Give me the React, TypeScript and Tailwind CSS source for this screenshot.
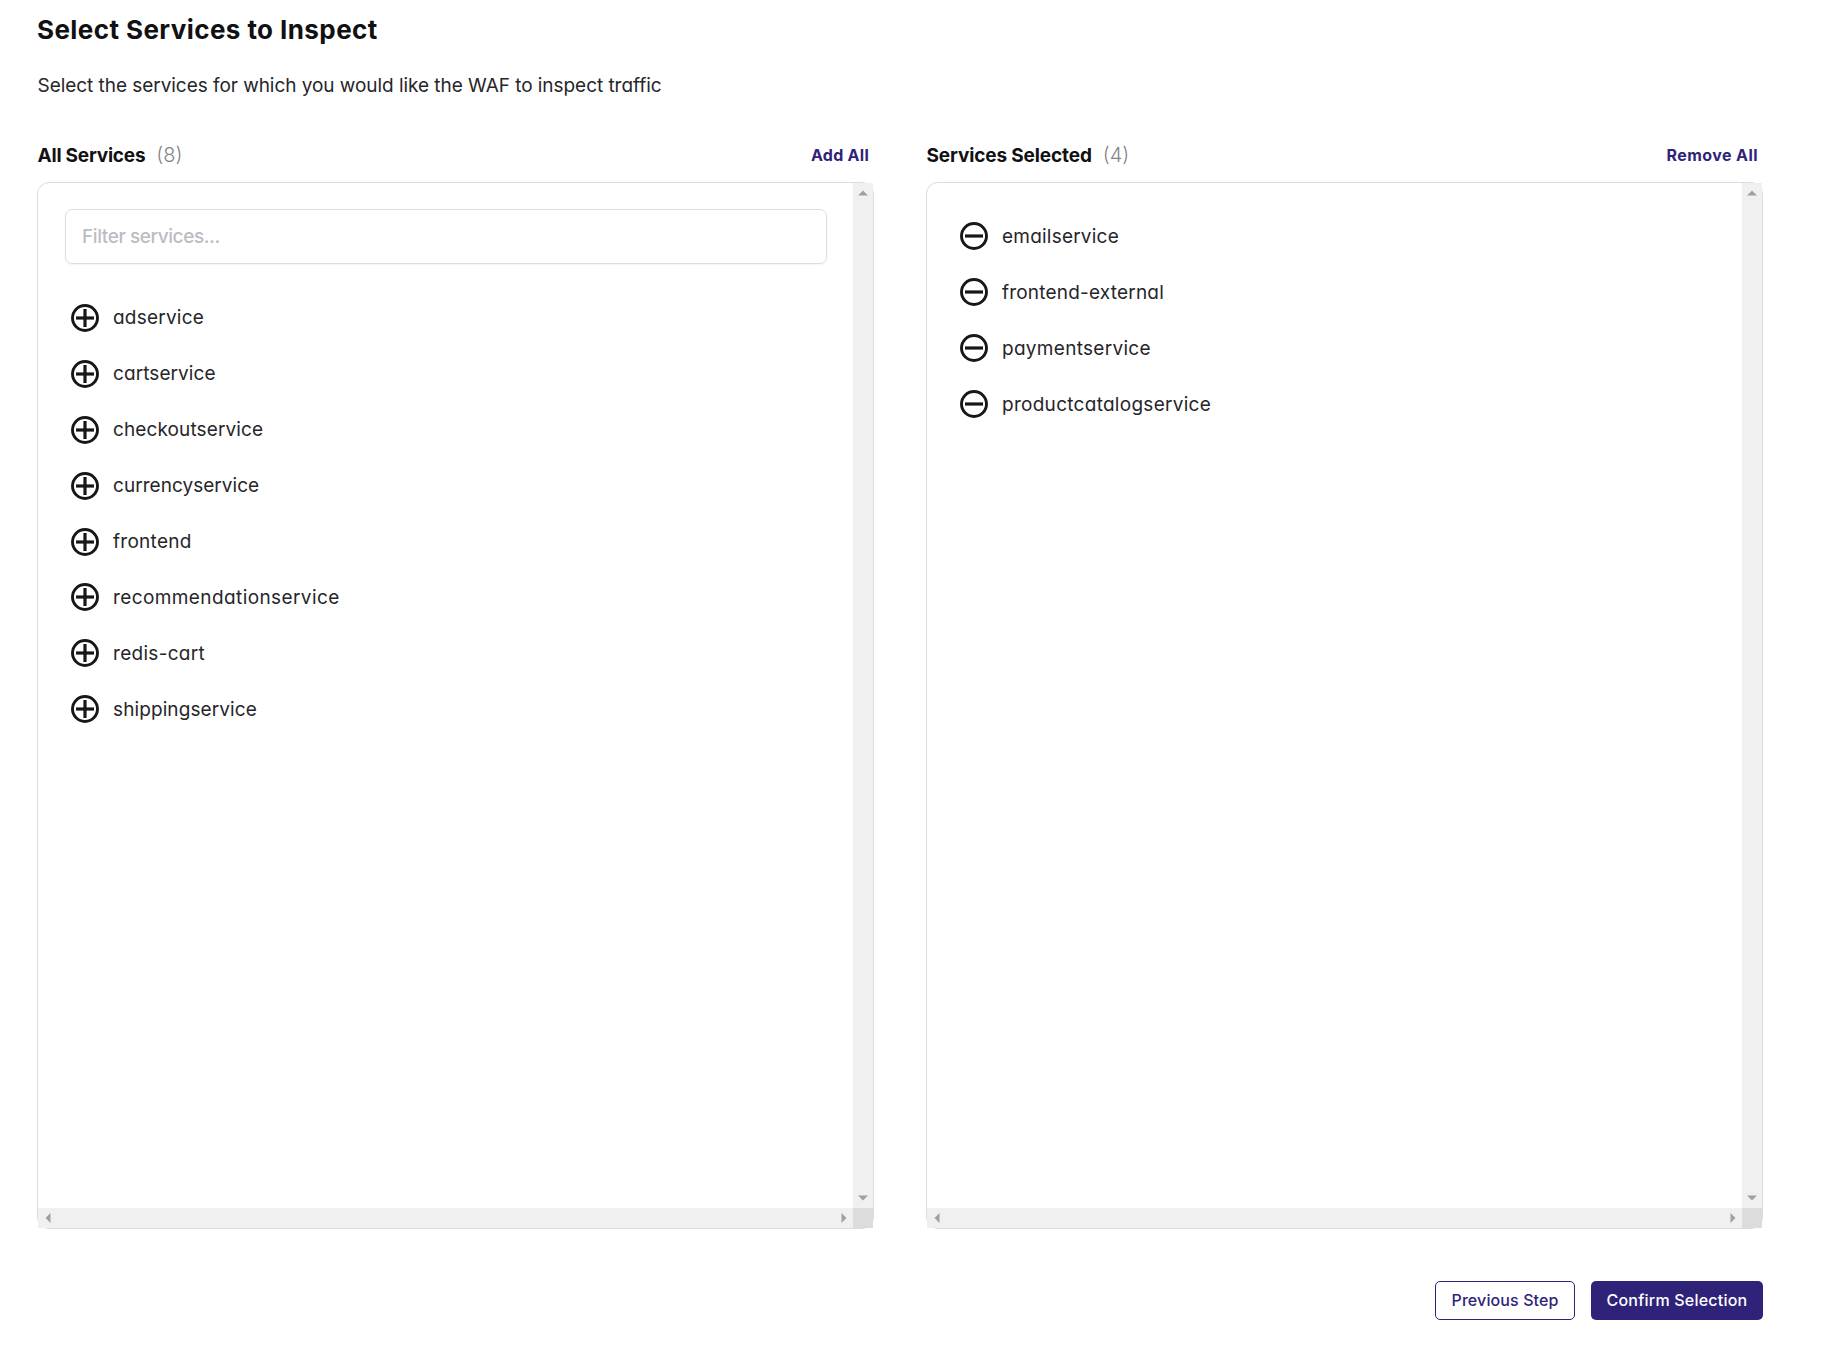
import { ReactNode } from 'react';

type Service = { name: string; tracking: string };

const available: Service[] = [
  { name: 'adservice', tracking: 'tracking-[0.22px]' },
  { name: 'cartservice', tracking: 'tracking-[0.08px]' },
  { name: 'checkoutservice', tracking: 'tracking-[0.11px]' },
  { name: 'currencyservice', tracking: 'tracking-[0.04px]' },
  { name: 'frontend', tracking: 'tracking-[0.28px]' },
  { name: 'recommendationservice', tracking: 'tracking-[0.4px]' },
  { name: 'redis-cart', tracking: 'tracking-[0.3px]' },
  { name: 'shippingservice', tracking: 'tracking-[0.1px]' },
];

const selected: Service[] = [
  { name: 'emailservice', tracking: 'tracking-[0.22px]' },
  { name: 'frontend-external', tracking: 'tracking-[0.2px]' },
  { name: 'paymentservice', tracking: 'tracking-[0.3px]' },
  { name: 'productcatalogservice', tracking: 'tracking-[0.28px]' },
];

function CircleIcon({ plus }: { plus?: boolean }) {
  return (
    <svg width="28" height="28" viewBox="0 0 28 28" fill="none" stroke="#17171a" className="shrink-0">
      <circle cx="14" cy="14" r="12.5" strokeWidth="2.9" />
      <path d="M5 14H23" strokeWidth="3.2" />
      {plus && <path d="M14 5V23" strokeWidth="3.2" />}
    </svg>
  );
}

function ServiceList({ items, plus }: { items: Service[]; plus?: boolean }) {
  return (
    <ul className="pl-[33px]">
      {items.map((s) => (
        <li key={s.name} className="flex h-[55.9px] items-center gap-[14px]">
          <CircleIcon plus={plus} />
          <span className={`pt-px text-[19px] leading-7 text-[#26262a] ${s.tracking}`}>{s.name}</span>
        </li>
      ))}
    </ul>
  );
}

function Arrow({ d }: { d: string }) {
  return (
    <svg width="10" height="10" viewBox="0 0 10 10" fill="#a0a0a0">
      <path d={d} />
    </svg>
  );
}

function ScrollPanel({ children }: { children: ReactNode }) {
  return (
    <div className="grid h-[1047px] grid-cols-[1fr_20px] grid-rows-[1fr_20px] rounded-xl border border-[#dcdcdc]">
      <div>{children}</div>
      <div className="flex flex-col items-center justify-between bg-[#f0f0f0] pt-[5px] pb-[5px]">
        <Arrow d="M0 7.5L5 2.5L10 7.5Z" />
        <Arrow d="M0 2.5L5 7.5L10 2.5Z" />
      </div>
      <div className="flex items-center justify-between bg-[#f0f0f0] pr-1 pl-[5px]">
        <Arrow d="M7.5 0L2.5 5L7.5 10Z" />
        <Arrow d="M2.5 0L7.5 5L2.5 10Z" />
      </div>
      <div className="bg-[#dcdcdc]" />
    </div>
  );
}

function ColumnHeader(props: { title: string; titleTracking: string; count: number; action: string; actionTracking: string }) {
  return (
    <div className="flex h-[27px] items-center justify-between pr-[5px] pl-[0.5px]">
      <div className="flex items-center gap-[11px]">
        <h2 className={`text-[19px] leading-[27px] font-bold text-[#111114] ${props.titleTracking}`}>{props.title}</h2>
        <span className="text-[20px] leading-[27px] font-light text-[#85858a]">({props.count})</span>
      </div>
      <button className={`text-[16px] leading-[27px] font-bold text-[#2f2379] ${props.actionTracking}`}>{props.action}</button>
    </div>
  );
}

export default function App() {
  return (
    <main className="flex h-[1354px] w-[1822px] flex-col bg-white pt-[12px] pr-[59px] pl-[37px] font-['Inter',sans-serif] [font-feature-settings:'cv11'] whitespace-nowrap">
      <h1 className="text-[26px] leading-[36px] font-bold tracking-[0.42px] text-[#111114]">Select Services to Inspect</h1>
      <p className="mt-[24px] pl-[0.5px] text-[19px] leading-[28px] tracking-[-0.045px] text-[#26262a]">
        Select the services for which you would like the WAF to inspect traffic
      </p>
      <div className="mt-[42px] grid grid-cols-[837px_837px] gap-[52px]">
        <section className="flex flex-col gap-[13px]">
          <ColumnHeader title="All Services" titleTracking="tracking-[-0.22px]" count={8} action="Add All" actionTracking="tracking-[0.26px]" />
          <ScrollPanel>
            <div className="pt-[26px] pr-[26px] pl-[27px]">
              <input
                placeholder="Filter services..."
                className="h-[55px] w-full rounded-[7px] border border-[#dedee0] px-[16px] text-[19px] font-medium tracking-[-0.42px] shadow-xs placeholder:text-[#bcbcc4]"
              />
            </div>
            <div className="pt-[26px]">
              <ServiceList items={available} plus />
            </div>
          </ScrollPanel>
        </section>
        <section className="flex flex-col gap-[13px]">
          <ColumnHeader title="Services Selected" titleTracking="tracking-[-0.13px]" count={4} action="Remove All" actionTracking="tracking-[0.43px]" />
          <ScrollPanel>
            <div className="pt-[25.5px]">
              <ServiceList items={selected} />
            </div>
          </ScrollPanel>
        </section>
      </div>
      <div className="mt-[52px] flex justify-end gap-4">
        <button className="h-[39px] w-[140px] rounded-[5px] border border-[#2f2379] pb-[2px] text-[16px] font-medium tracking-[0.11px] text-[#2f2379]">
          Previous Step
        </button>
        <button className="h-[39px] w-[172px] rounded-[5px] bg-[#2f2379] pb-[2px] text-[16px] font-medium tracking-[0.22px] text-white">
          Confirm Selection
        </button>
      </div>
    </main>
  );
}
